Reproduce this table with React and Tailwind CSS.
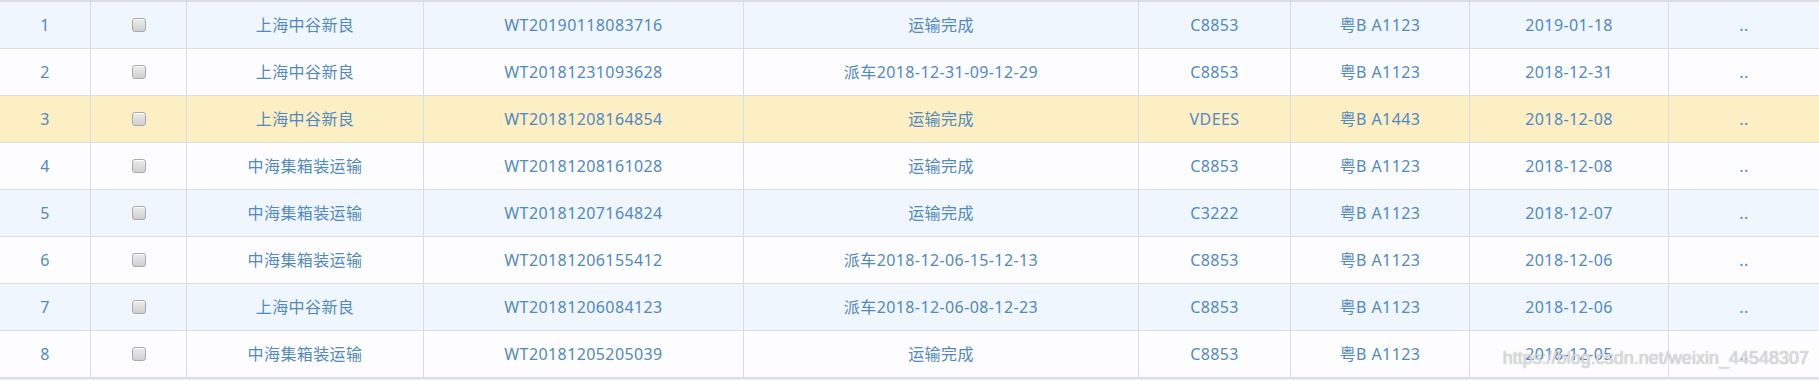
import React from 'react'

const rows = [
  ['1', '上海中谷新良', 'WT20190118083716', '运输完成', 'C8853', '粤B A1123', '2019-01-18'],
  ['2', '上海中谷新良', 'WT20181231093628', '派车2018-12-31-09-12-29', 'C8853', '粤B A1123', '2018-12-31'],
  ['3', '上海中谷新良', 'WT20181208164854', '运输完成', 'VDEES', '粤B A1443', '2018-12-08'],
  ['4', '中海集箱装运输', 'WT20181208161028', '运输完成', 'C8853', '粤B A1123', '2018-12-08'],
  ['5', '中海集箱装运输', 'WT20181207164824', '运输完成', 'C3222', '粤B A1123', '2018-12-07'],
  ['6', '中海集箱装运输', 'WT20181206155412', '派车2018-12-06-15-12-13', 'C8853', '粤B A1123', '2018-12-06'],
  ['7', '上海中谷新良', 'WT20181206084123', '派车2018-12-06-08-12-23', 'C8853', '粤B A1123', '2018-12-06'],
  ['8', '中海集箱装运输', 'WT20181205205039', '运输完成', 'C8853', '粤B A1123', '2018-12-05'],
]

function Checkbox() {
  return (
    <div className="w-[14px] h-[14px] rounded-[3px] border border-[#a9a9a9] bg-gradient-to-b from-[#ececec] to-[#d0d0d0] shadow-[inset_0_1px_0_#fff]"></div>
  )
}

function Cell({ w, children, last }) {
  return (
    <div
      className={`${w} shrink-0 h-full flex items-center justify-center ${last ? '' : 'border-r border-[#dcdcdc]'}`}
    >
      {children}
    </div>
  )
}

export default function App() {
  return (
    <div
      className="relative w-[1819px] h-[380px] bg-[#fdfdff] text-[#5289c0] text-[16px] tracking-[0.4px] overflow-hidden"
      style={{ fontFamily: '"Noto Sans", "Noto Sans CJK SC", sans-serif' }}
    >
      <div className="h-[2px] bg-[#dcdde0]"></div>
      {rows.map((r, i) => {
        const bg = i === 2 ? 'bg-[#fcefc3]' : i % 2 === 0 ? 'bg-[#eff6fe]' : 'bg-[#fdfdff]'
        return (
          <div key={r[0]} className={`flex h-[47px] border-b border-[#dcdcdc] ${bg}`}>
            <Cell w="w-[91px]">{r[0]}</Cell>
            <Cell w="w-[96px]"><Checkbox /></Cell>
            <Cell w="w-[237px]">{r[1]}</Cell>
            <Cell w="w-[320px]">{r[2]}</Cell>
            <Cell w="w-[395px]">{r[3]}</Cell>
            <Cell w="w-[152px]">{r[4]}</Cell>
            <Cell w="w-[179px]">{r[5]}</Cell>
            <Cell w="w-[199px]">{r[6]}</Cell>
            <Cell w="flex-1" last>..</Cell>
          </div>
        )
      })}
      <div className="h-[2px] bg-[#dbe9f6]"></div>
      <div
        className="absolute right-[10px] top-[345px] text-[18px] tracking-normal text-[#eeeeee]/80 [text-shadow:0_0_1px_#8f8f8f]"
        style={{ fontFamily: '"Liberation Sans", Arial, sans-serif' }}
      >
        https://blog.csdn.net/weixin_44548307
      </div>
    </div>
  )
}
